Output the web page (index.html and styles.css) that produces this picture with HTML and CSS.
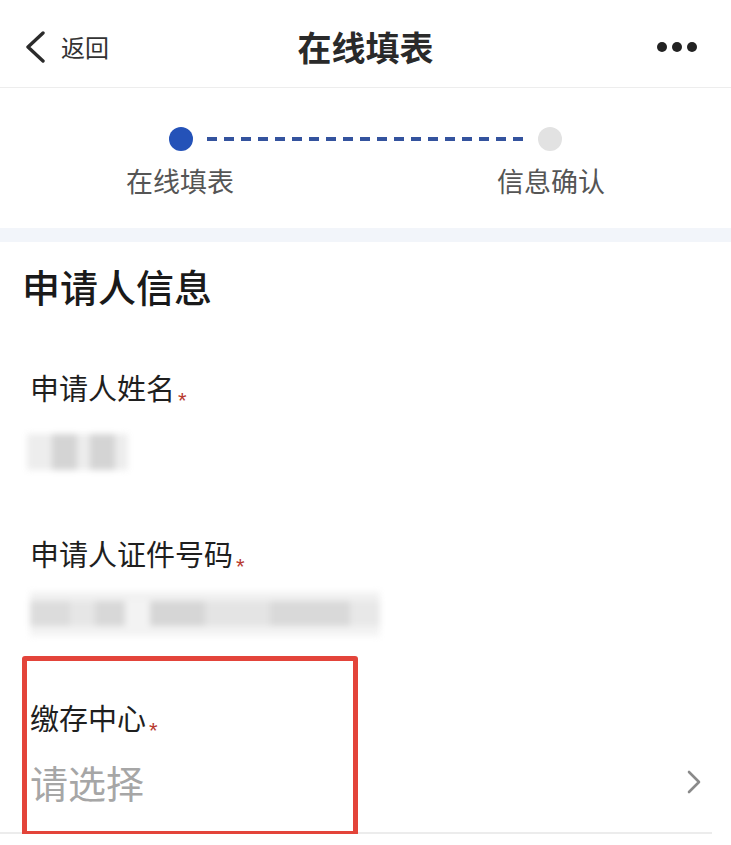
FILE: index.html
```html
<!doctype html>

<html>
  <head>
    <meta charset="UTF-8" />
    <title>在线填表</title>
    <link rel="stylesheet" href="styles.css">
  </head>

  <body>
    <div class="navbar">
      <div class="back">
        <svg width="22" height="32" viewBox="0 0 22 32">
          <path d="M19 2 L4 16 L19 30" fill="none" stroke="#2b2b2b" stroke-width="3.4" stroke-linecap="round" stroke-linejoin="round" />
        </svg>
        <span>返回</span>
      </div>
      <div class="title">在线填表</div>
      <div class="more"><i></i><i></i><i></i></div>
    </div>

    <div class="steps">
      <div class="track">
        <span class="dot active"></span>
        <span class="dash"></span>
        <span class="dot"></span>
      </div>
      <div class="labels">
        <span>在线填表</span>
        <span>信息确认</span>
      </div>
    </div>
    <div class="band"></div>

    <div class="form">
      <div class="sec-title">申请人信息</div>

      <div class="field name">
        <div class="label">申请人姓名<em>*</em></div>
        <div class="blur blur-name">
          <b class="lt"></b><b></b><b class="lt"></b><b></b><b class="lt"></b>
        </div>
      </div>

      <div class="field idno">
        <div class="label">申请人证件号码<em>*</em></div>
        <div class="blur blur-id"></div>
      </div>

      <div class="field select">
        <div class="label">缴存中心<em>*</em></div>
        <div class="row">
          <span class="placeholder">请选择</span>
          <svg width="16" height="24" viewBox="0 0 16 24">
            <path d="M3 2 L13 12 L3 22" fill="none" stroke="#8a8a8a" stroke-width="2.6" stroke-linecap="round" stroke-linejoin="round" />
          </svg>
        </div>
        <div class="mark"></div>
      </div>
    </div>
  </body>
</html>
```

FILE: styles.css
```css
* {
  box-sizing: border-box;
}

body {
  margin: 0;
  background: #fff;
  font-family: "Noto Sans CJK SC", "Noto Sans", sans-serif;
  color: #1f1f1f;
}

.navbar {
  height: 88px;
  border-bottom: 1px solid #ededed;
  display: flex;
  align-items: center;
  justify-content: space-between;
  padding: 6px 34px 0 24px;
  position: relative;
}

.back {
  display: flex;
  align-items: center;
  gap: 15px;
  font-size: 24px;
  color: #333;
}

.title {
  position: absolute;
  left: 0;
  right: 0;
  top: 24px;
  text-align: center;
  font-size: 34px;
  line-height: 46px;
  font-weight: bold;
  color: #2a2a2a;
  pointer-events: none;
}

.more {
  display: flex;
  gap: 5px;
}

.more i {
  width: 10px;
  height: 10px;
  border-radius: 50%;
  background: #222;
}

.steps {
  height: 140px;
  padding-top: 39px;
}

.track {
  display: flex;
  align-items: center;
  margin: 0 169px;
}

.dot {
  width: 24px;
  height: 24px;
  border-radius: 50%;
  background: #e2e2e2;
}

.dot.active {
  background: #2452b8;
}

.dash {
  flex: 1;
  height: 4px;
  margin: 0 14px;
  background: repeating-linear-gradient(to right, #34539e 0 10px, transparent 10px 17px);
}

.labels {
  display: flex;
  justify-content: space-between;
  margin: 14px 126px 0 126px;
  font-size: 27px;
  line-height: 32px;
  color: #555;
}

.band {
  height: 14px;
  background: #f2f5fa;
}

.sec-title {
  margin: 22px 0 0 22px;
  font-size: 38px;
  line-height: 44px;
  font-weight: 500;
  color: #1a1a1a;
}

.field {
  padding-left: 30px;
}

.label {
  font-size: 29px;
  line-height: 36px;
  color: #1f1f1f;
}

.label em {
  display: inline-block;
  font-style: normal;
  font-family: "Liberation Sans", sans-serif;
  font-size: 22px;
  line-height: 0;
  color: #b8392f;
  margin-left: 3px;
  transform: translateY(8px);
}

.name .label {
  margin-top: 61px;
}

.idno .label {
  margin-top: 65px;
}

.blur {
  filter: blur(3px);
}

.blur-name {
  display: flex;
  margin-top: 29px;
  margin-left: -3px;
  height: 36px;
}

.blur-name b {
  width: 25px;
  background: #d4d4d4;
}

.blur-name b.lt {
  width: 13px;
  background: #ededed;
}

.blur-name b:first-child {
  width: 25px;
}

.blur-id {
  margin-top: 21px;
  width: 350px;
  height: 44px;
  background:
    linear-gradient(to right, #dcdcdc 0 40px, #e6e6e6 40px 65px, #d8d8d8 65px 95px, #f3f3f3 95px 120px, #d6d6d6 120px 175px, #e4e4e4 175px 240px, #d9d9d9 240px 320px, #e8e8e8 320px);
  border-top: 9px solid #f1f1f1;
  border-bottom: 10px solid #f3f3f3;
}

.select {
  position: relative;
  margin-right: 19px;
  padding-top: 63px;
  padding-bottom: 27px;
  border-bottom: 2px solid #ececec;
}

.row {
  display: flex;
  align-items: center;
  justify-content: space-between;
  margin-top: 24px;
  padding-right: 10px;
}

.placeholder {
  font-size: 38px;
  line-height: 46px;
  color: #a6a6a6;
}

.mark {
  position: absolute;
  left: 22px;
  top: 20px;
  width: 336px;
  height: 180px;
  border: 5px solid #e3443a;
  border-radius: 3px;
}
```
